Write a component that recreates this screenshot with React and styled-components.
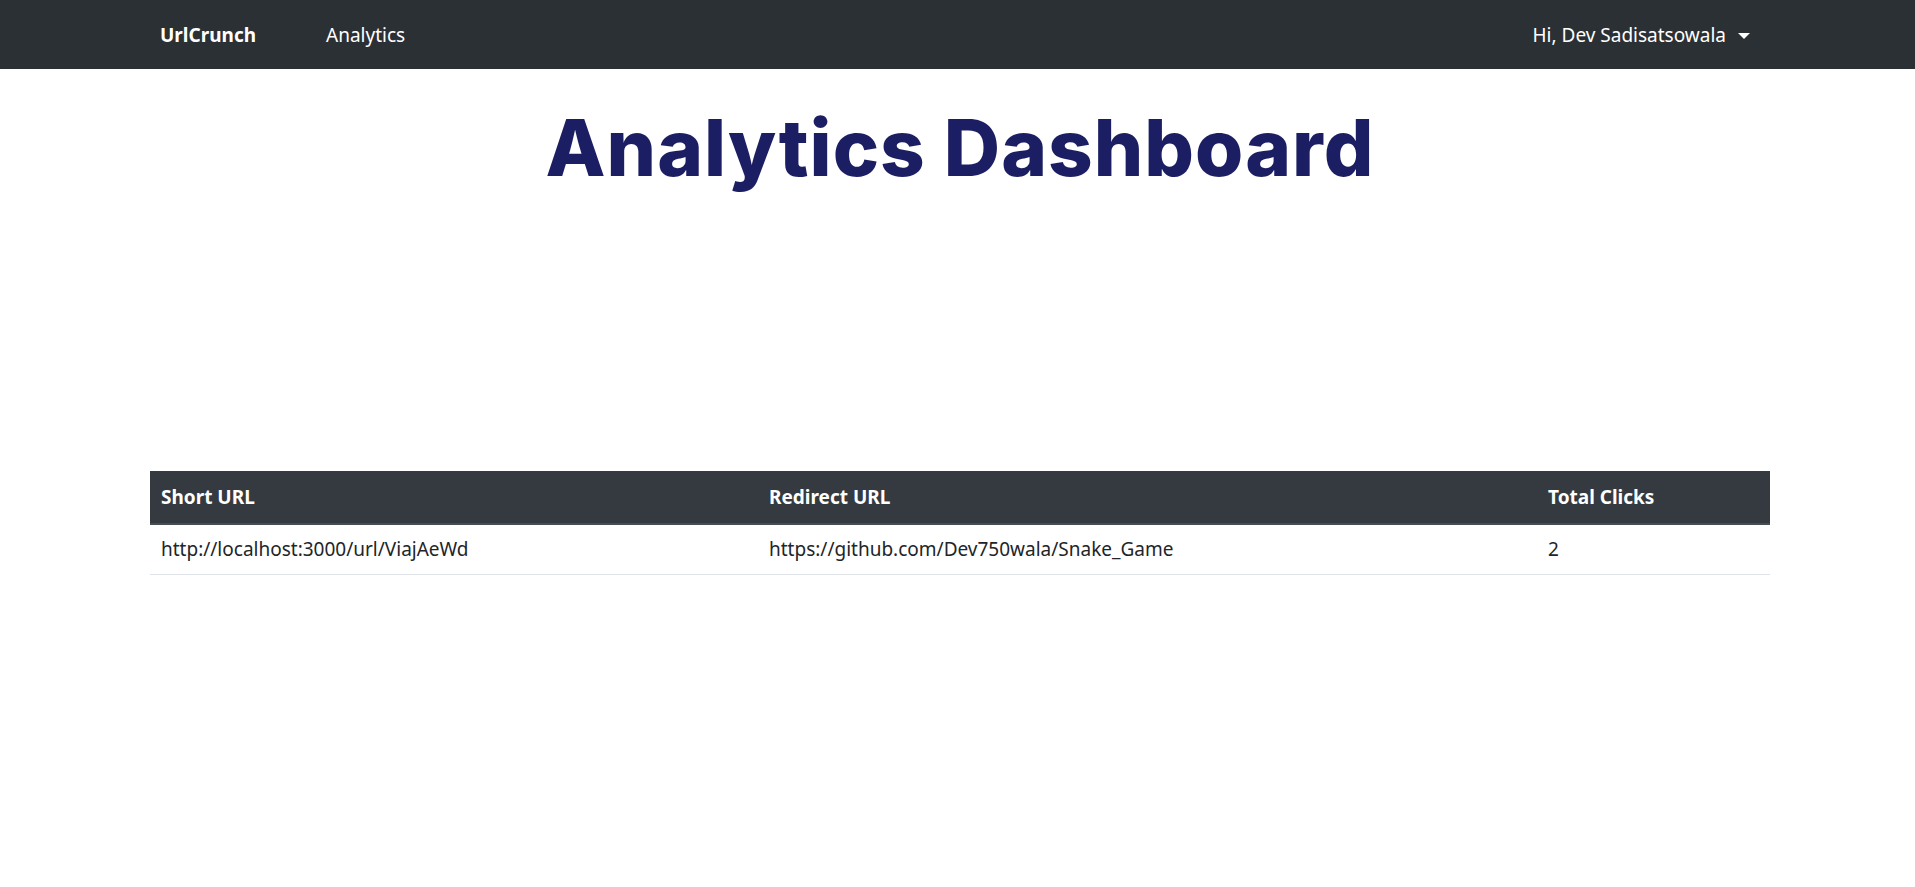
import React from "react";
import styled, { createGlobalStyle } from "styled-components";

const rows = [
  {
    short: "http://localhost:3000/url/ViajAeWd",
    redirect: "https://github.com/Dev750wala/Snake_Game",
    clicks: 2,
  },
];

const Global = createGlobalStyle`
  * { box-sizing: border-box; }
  body {
    margin: 0;
    background: #fff;
    font-family: "Noto Sans", "Open Sans", sans-serif;
    color: #212529;
  }
`;

const NavBar = styled.nav`
  height: 69px;
  background: #2b3035;
  display: flex;
  align-items: center;
  padding: 0 165px 0 160px;
`;

const Brand = styled.a`
  color: #fff;
  font-weight: 700;
  font-size: 19px;
  text-decoration: none;
  margin-right: 70px;
`;

const NavLink = styled.a`
  color: #fff;
  font-size: 19px;
  text-decoration: none;
`;

const UserMenu = styled.div`
  margin-left: auto;
  display: flex;
  align-items: center;
  gap: 12px;
  color: #fff;
  font-size: 19px;
`;

const Caret = styled.span`
  width: 0;
  height: 0;
  border-left: 6px solid transparent;
  border-right: 6px solid transparent;
  border-top: 6px solid #fff;
  margin-top: 2px;
`;

const Main = styled.main`
  padding: 0 145px 0 150px;
`;

const Title = styled.h1`
  margin: 0;
  padding-top: 32px;
  text-align: center;
  font-family: Inter, "Noto Sans", sans-serif;
  font-weight: 800;
  font-size: 78px;
  letter-spacing: 1px;
  line-height: 94px;
  color: #1c1e63;
`;

const ChartArea = styled.div`
  height: 276px;
`;

const Table = styled.table`
  width: 100%;
  border-collapse: collapse;
  font-size: 19px;
`;

const Th = styled.th`
  background: #343a40;
  color: #fff;
  text-align: left;
  font-weight: 700;
  height: 53px;
  padding: 0 11px;
  border-bottom: 2px solid #454d55;
  width: ${(p) => p.$w}px;
`;

const Td = styled.td`
  height: 50px;
  padding: 0 11px;
  border-bottom: 1px solid #dee2e6;
`;

export default function App() {
  return (
    <>
      <Global />
      <NavBar>
        <Brand href="#">UrlCrunch</Brand>
        <NavLink href="#">Analytics</NavLink>
        <UserMenu>
          Hi, Dev Sadisatsowala
          <Caret />
        </UserMenu>
      </NavBar>
      <Main>
        <Title>Analytics Dashboard</Title>
        <ChartArea />
        <Table>
          <thead>
            <tr>
              <Th $w={608}>Short URL</Th>
              <Th $w={779}>Redirect URL</Th>
              <Th $w={233}>Total Clicks</Th>
            </tr>
          </thead>
          <tbody>
            {rows.map((r) => (
              <tr key={r.short}>
                <Td>{r.short}</Td>
                <Td>{r.redirect}</Td>
                <Td>{r.clicks}</Td>
              </tr>
            ))}
          </tbody>
        </Table>
      </Main>
    </>
  );
}
